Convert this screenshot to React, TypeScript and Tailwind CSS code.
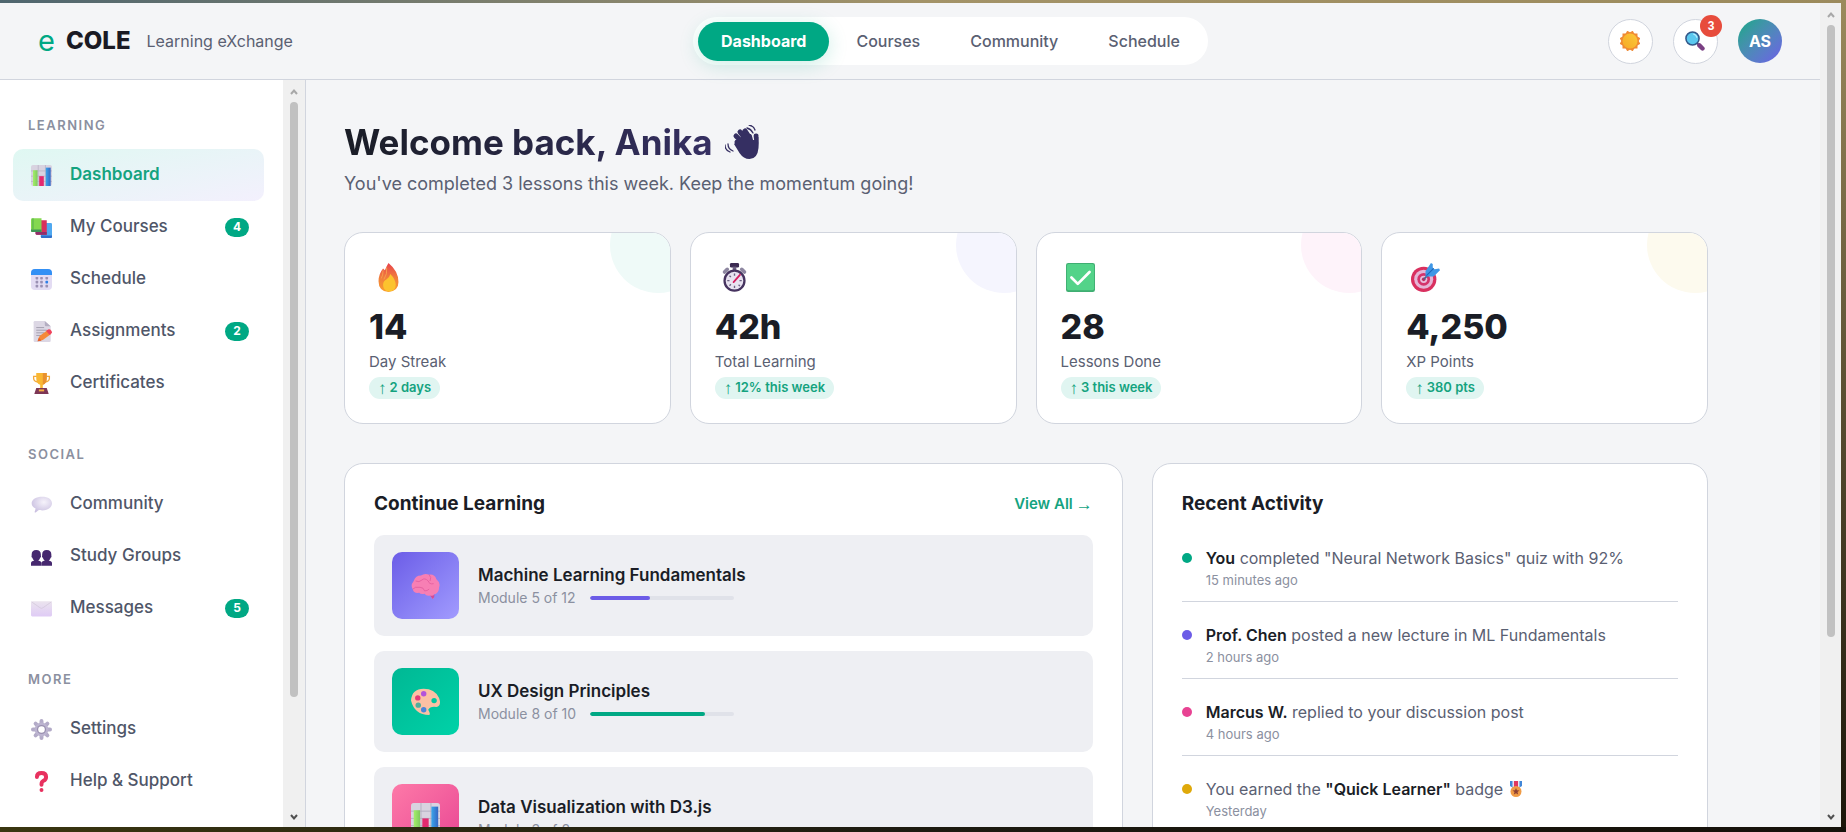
import React from "react";

type IconProps = { className?: string };

function ChartIcon({ className }: IconProps) {
  return (
    <svg viewBox="0 0 32 32" className={className} aria-hidden>
      <defs>
        <linearGradient id="barGreen" x1="0" x2="1">
          <stop offset="0" stopColor="#a4f06a" />
          <stop offset="1" stopColor="#7fc95e" />
        </linearGradient>
        <linearGradient id="barBlue" x1="0" x2="1">
          <stop offset="0" stopColor="#3aa5ea" />
          <stop offset="1" stopColor="#3566c4" />
        </linearGradient>
      </defs>
      <rect width="32" height="32" rx="3" fill="#d8d3e0" />
      <path d="M0 9h32M0 17h32M0 25h32M11 0v32M22 0v32" stroke="#b3adc0" strokeWidth="1" />
      <rect x="3" y="8" width="7" height="24" fill="url(#barGreen)" />
      <rect x="12.500" y="17" width="7" height="15" fill="#e3296f" />
      <rect x="22.500" y="4" width="7.500" height="28" fill="url(#barBlue)" />
    </svg>
  );
}

function BooksIcon({ className }: IconProps) {
  return (
    <svg viewBox="0 0 32 32" className={className} aria-hidden>
      <path d="M15 9h15a2 2 0 0 1 2 2v19a2 2 0 0 1-2 2H17a2 2 0 0 1-2-2z" fill="#4fa8f0" />
      <path d="M15 28h17v2a2 2 0 0 1-2 2H17a2 2 0 0 1-2-2z" fill="#2f6fc9" />
      <path d="M7 5h17v22H9a2 2 0 0 1-2-2z" fill="#d92f5c" />
      <path d="M7 23h17v4H9a2 2 0 0 1-2-2z" fill="#8d2f6b" />
      <path d="M2 2h14v21H2a2 2 0 0 1-2-2V4a2 2 0 0 1 2-2z" fill="#84d850" />
      <path d="M0 19h16v4H2a2 2 0 0 1-2-2z" fill="#3f9457" />
      <path d="M3 2v17" stroke="#4fae4d" strokeWidth="1.500" />
    </svg>
  );
}

function CalendarIcon({ className }: IconProps) {
  return (
    <svg viewBox="0 0 32 32" className={className} aria-hidden>
      <rect width="32" height="32" rx="6" fill="#e3dcf3" />
      <path d="M0 9V6a6 6 0 0 1 6-6h20a6 6 0 0 1 6 6v3z" fill="#3390f5" />
      <g fill="#9a90b3">
        <rect x="7" y="12" width="4" height="4" rx="1" />
        <rect x="14" y="12" width="4" height="4" rx="1" />
        <rect x="22" y="12" width="4" height="4" rx="1" />
        <rect x="7" y="18" width="4" height="4" rx="1" />
        <rect x="14" y="18" width="4" height="4" rx="1" />
        <rect x="7" y="24" width="4" height="4" rx="1" />
        <rect x="14" y="24" width="4" height="4" rx="1" />
        <rect x="22" y="24" width="4" height="4" rx="1" />
      </g>
      <rect x="22" y="18" width="4" height="4" rx="1" fill="#2f7fe6" />
    </svg>
  );
}

function MemoIcon({ className }: IconProps) {
  return (
    <svg viewBox="0 0 32 32" className={className} aria-hidden>
      <path d="M6 0h15l9 8v22a2 2 0 0 1-2 2H6a2 2 0 0 1-2-2V2a2 2 0 0 1 2-2z" fill="#dcd7e4" />
      <path d="M21 0l9 8h-7a2 2 0 0 1-2-2z" fill="#b4aec2" />
      <path d="M8 10h12M8 14h16M8 18h12M8 22h8" stroke="#a49fb0" strokeWidth="1.500" />
      <path d="M10 31l3-8L25 14l5 6-12 9z" fill="#f5893a" />
      <path d="M23 15l3-2q3-1 5 2t-1 5l-2 1z" fill="#f0435c" />
      <path d="M10 31l2-6 4 5z" fill="#e8622c" />
    </svg>
  );
}

function TrophyIcon({ className }: IconProps) {
  return (
    <svg viewBox="0 0 32 32" className={className} aria-hidden>
      <path d="M9 5H4v3q0 5 7 6M23 5h5v3q0 5-7 6" fill="none" stroke="#f2a93b" strokeWidth="2" />
      <path d="M8 0h16v8q0 8-6 10v5h-4v-5Q8 16 8 8z" fill="#f9b733" />
      <path d="M18 0h6v8q0 8-6 10z" fill="#e89130" />
      <path d="M8 23h16l3 9H5z" fill="#7d3655" />
      <rect x="12" y="25" width="8" height="3" fill="#f5b041" />
    </svg>
  );
}

function SpeechIcon({ className }: IconProps) {
  return (
    <svg viewBox="0 0 32 32" className={className} aria-hidden>
      <defs>
        <radialGradient id="bubble" cx="0.6" cy="0.35" r="0.7">
          <stop offset="0" stopColor="#f6f3fb" />
          <stop offset="1" stopColor="#c9bfe0" />
        </radialGradient>
      </defs>
      <path
        d="M17 4c9 0 15 4 15 10s-6 11-15 11c-2 0-3 0-5-.5L7 28c-1 .5-2 0-1-2l1-4C3 20 1 18 1 14 1 8 8 4 17 4z"
        fill="url(#bubble)"
      />
    </svg>
  );
}

function PeopleIcon({ className }: IconProps) {
  return (
    <svg viewBox="0 0 32 32" className={className} aria-hidden>
      <g fill="#46286f">
        <path d="M1 13q0-7 7-7t7 7v1q1 3-1 4-1 3-3 4 5 1 5 4v4H0v-4q0-3 5-4-2-1-3-4-2-1-1-4z" />
        <path d="M17 13q0-7 7-7t7 7v1q1 3-1 4-1 3-3 4 5 1 5 4v4H16v-4q0-3 5-4-2-1-3-4-2-1-1-4z" />
      </g>
    </svg>
  );
}

function EnvelopeIcon({ className }: IconProps) {
  return (
    <svg viewBox="0 0 32 32" className={className} aria-hidden>
      <defs>
        <linearGradient id="paper" x1="0" y1="0" x2="0" y2="1">
          <stop offset="0" stopColor="#ebe4ee" />
          <stop offset="1" stopColor="#dfcbf5" />
        </linearGradient>
      </defs>
      <rect y="5" width="32" height="23" rx="2" fill="url(#paper)" />
      <path d="M1 6l13 9q2 1.500 4 0L31 6" fill="none" stroke="#cfc5d8" strokeWidth="1" />
    </svg>
  );
}

function GearIcon({ className }: IconProps) {
  return (
    <svg viewBox="0 0 32 32" className={className} aria-hidden>
      <g stroke="#b3abc8" strokeWidth="6" strokeLinecap="round">
        <path d="M16 3v26M3 16h26M7 7l18 18M25 7L7 25" />
      </g>
      <circle cx="16" cy="16" r="10.500" fill="#bcb4d0" />
      <circle cx="16" cy="16" r="7" fill="#9a90b0" />
      <circle cx="16" cy="16" r="5" fill="#fff" />
    </svg>
  );
}

function QuestionIcon({ className }: IconProps) {
  return (
    <svg viewBox="0 0 32 32" className={className} aria-hidden>
      <path
        d="M9 9q0-6 7-6t7 6q0 4-4 6-3 1.500-3 5v1"
        fill="none"
        stroke="#e8315f"
        strokeWidth="6"
        strokeLinecap="round"
      />
      <circle cx="16" cy="29" r="3" fill="#e8315f" />
    </svg>
  );
}

function SunIcon({ className }: IconProps) {
  return (
    <svg viewBox="0 0 32 32" className={className} aria-hidden>
      <defs>
        <linearGradient id="sunFace" x1="0" y1="1" x2="1" y2="0">
          <stop offset="0" stopColor="#f5a928" />
          <stop offset="1" stopColor="#fcc938" />
        </linearGradient>
      </defs>
      <g fill="#f08a34">
        <rect x="4" y="4" width="24" height="24" />
        <rect x="4" y="4" width="24" height="24" transform="rotate(30 16 16)" />
        <rect x="4" y="4" width="24" height="24" transform="rotate(60 16 16)" />
      </g>
      <circle cx="16" cy="16" r="12" fill="url(#sunFace)" />
    </svg>
  );
}

function MagnifierIcon({ className }: IconProps) {
  return (
    <svg viewBox="0 0 32 32" className={className} aria-hidden>
      <path d="M19 19l4 4" stroke="#4b4170" strokeWidth="3" />
      <path d="M23 23l5 5" stroke="#7a3f83" strokeWidth="7" strokeLinecap="round" />
      <circle cx="12" cy="12" r="10.500" fill="#5bc8ef" stroke="#33588a" strokeWidth="2.500" />
      <path d="M14 5q4 1 5 5" stroke="#b5edff" strokeWidth="2" fill="none" strokeLinecap="round" />
    </svg>
  );
}

function WaveIcon({ className }: IconProps) {
  return (
    <svg viewBox="0 0 34 34" className={className} aria-hidden>
      <g stroke="#352f62" strokeWidth="5" strokeLinecap="round">
        <path d="M12 17l8 8M11 11l9 9M15 7l8 10M20 6l6 9M31 11l-1 11" />
      </g>
      <path d="M9 19l9-9 8-1 3 5 4.500-2q.5 6 0 11-1 11-9 11-6 0-10-6z" fill="#352f62" />
      <path d="M27 8l1.500 6.500" stroke="#f4f5f7" strokeWidth="1.200" strokeLinecap="round" />
      <path
        d="M22 3q4 1 6 5M24 0q5 1 6 5M3 19q0 5 5 7M0 20q0 5 5 7"
        fill="none"
        stroke="#352f62"
        strokeWidth="1.300"
        strokeLinecap="round"
      />
    </svg>
  );
}

function FireIcon({ className }: IconProps) {
  return (
    <svg viewBox="0 0 32 32" className={className} aria-hidden>
      <defs>
        <linearGradient id="flame" x1="0" y1="0" x2="0" y2="1">
          <stop offset="0" stopColor="#e8434d" />
          <stop offset="0.500" stopColor="#f07d3c" />
          <stop offset="1" stopColor="#f9a02f" />
        </linearGradient>
      </defs>
      <path d="M16 0q11 9 11 21 0 10-11 11Q5 31 5 20q0-8 5-14l2 2q2-5 4-8z" fill="url(#flame)" />
      <path d="M18 12q6 6 6 12 0 7-8 7.500-6-1-6-7.500 0-4 4-6 3-2 4-6z" fill="#fcc32e" />
      <path d="M8 17q2-3 2-9M11 18q4-6 3-13" stroke="#f6a04d" fill="none" strokeWidth="1" />
    </svg>
  );
}

function StopwatchIcon({ className }: IconProps) {
  return (
    <svg viewBox="0 0 32 32" className={className} aria-hidden>
      <path d="M5 10l3-3M27 10l-3-3" stroke="#8d86a0" strokeWidth="4" strokeLinecap="round" />
      <rect x="11" y="0" width="10" height="5" rx="1.500" fill="#3c2b52" />
      <rect x="14" y="4" width="4" height="4" fill="#6b5f80" />
      <circle cx="16" cy="19.500" r="11" fill="#e8e2f0" stroke="#46335f" strokeWidth="2.500" />
      <path d="M16 11.500v2.500M16 25v2.500M8 19.500h2.500M21.500 19.500H24M10.500 14l1.500 1.500M20.500 24l1.500 1.500M10.500 25l1.500-1.500" stroke="#6b5f80" strokeWidth="1.500" />
      <path d="M15 21l7-8" stroke="#d61f62" strokeWidth="2" strokeLinecap="round" />
    </svg>
  );
}

function CheckIcon({ className }: IconProps) {
  return (
    <svg viewBox="0 0 32 32" className={className} aria-hidden>
      <rect x="0" width="32" height="32" rx="2.500" fill="#3fae72" />
      <rect x="1" y="1" width="30" height="29" rx="2" fill="#53d389" />
      <path d="M6 16l7 7L26 10" fill="none" stroke="#fff" strokeWidth="3" strokeLinecap="round" strokeLinejoin="round" />
    </svg>
  );
}

function TargetIcon({ className }: IconProps) {
  return (
    <svg viewBox="0 0 32 32" className={className} aria-hidden>
      <circle cx="14" cy="18" r="14" fill="#d9305f" />
      <circle cx="14" cy="18" r="10.500" fill="#e5b5d6" />
      <circle cx="14" cy="18" r="7" fill="#d4346b" />
      <circle cx="14" cy="18" r="4" fill="#e8bddb" />
      <circle cx="14" cy="18" r="2" fill="#c22a5c" />
      <path d="M14 18l9-9" stroke="#4b5f8f" strokeWidth="1.800" />
      <path d="M16 15V9l6-9 2 1v4l2 2 5-1 1 2-7 7z" fill="#3f97e6" />
      <path d="M17 14l8-8" stroke="#1f66b8" strokeWidth="1.200" />
    </svg>
  );
}

function BrainIcon({ className }: IconProps) {
  return (
    <svg viewBox="0 0 32 32" className={className} aria-hidden>
      <path
        d="M2 20Q-1 16 3 11 5 5 11 5q4-3 9-1 6-1 8 5 5 4 3 9 0 7-6 8 1 4-1 5l-3-4q-4 1-6-2-4 1-6-1-6 1-7-4z"
        fill="#f77fb4"
      />
      <path
        d="M2 20q2-3 8-2 4 0 5 4 3 0 5-2M5 11q4 2 7-1t7 1q1 4 6 3M20 4q3 3 1 7"
        fill="none"
        stroke="#e35f9f"
        strokeWidth="1"
      />
      <path d="M21 27q3 1 5-1 0 4-2 5z" fill="#d14b98" />
    </svg>
  );
}

function PaletteIcon({ className }: IconProps) {
  return (
    <svg viewBox="0 0 32 32" className={className} aria-hidden>
      <path
        fillRule="evenodd"
        d="M0 15Q1 2 14 2q12 0 17 10 3 9-3 10-7-1-9 3 3 5 1 6Q4 31 0 15zm22.500 0a3 3 0 1 0 6 0 3 3 0 1 0-6 0z"
        fill="#fcc0a4"
      />
      <circle cx="14" cy="7.500" r="3" fill="#b353db" />
      <circle cx="7.500" cy="12" r="3" fill="#e33a78" />
      <circle cx="8" cy="20" r="3" fill="#4fae9c" />
      <circle cx="14" cy="25" r="3" fill="#4a86d9" />
    </svg>
  );
}

function MedalIcon({ className }: IconProps) {
  return (
    <svg viewBox="0 0 32 32" className={className} aria-hidden>
      <path d="M4 0h24v10l-8 5h-8l-8-5z" fill="#4187d8" />
      <path d="M9 0h14v12H9z" fill="#e9e4f0" />
      <path d="M12 0h8v13h-8z" fill="#e0375f" />
      <circle cx="16" cy="21" r="11" fill="#f09b45" />
      <path d="M16 14l2 4.500 5 .5-4 3.200 1.300 4.800-4.300-2.600-4.300 2.600L13 22.200 9 19l5-.5z" fill="#8d4032" />
    </svg>
  );
}

type NavItem = {
  label: string;
  icon: (p: IconProps) => React.ReactElement;
  badge?: number;
  active?: boolean;
};

const sections: { title: string; items: NavItem[] }[] = [
  {
    title: "LEARNING",
    items: [
      { label: "Dashboard", icon: ChartIcon, active: true },
      { label: "My Courses", icon: BooksIcon, badge: 4 },
      { label: "Schedule", icon: CalendarIcon },
      { label: "Assignments", icon: MemoIcon, badge: 2 },
      { label: "Certificates", icon: TrophyIcon },
    ],
  },
  {
    title: "SOCIAL",
    items: [
      { label: "Community", icon: SpeechIcon },
      { label: "Study Groups", icon: PeopleIcon },
      { label: "Messages", icon: EnvelopeIcon, badge: 5 },
    ],
  },
  {
    title: "MORE",
    items: [
      { label: "Settings", icon: GearIcon },
      { label: "Help & Support", icon: QuestionIcon },
    ],
  },
];

const stats = [
  { icon: FireIcon, value: "14", label: "Day Streak", change: "2 days", tint: "bg-[#effaf8]" },
  { icon: StopwatchIcon, value: "42h", label: "Total Learning", change: "12% this week", tint: "bg-[#f5f5fe]" },
  { icon: CheckIcon, value: "28", label: "Lessons Done", change: "3 this week", tint: "bg-[#fef3fa]" },
  { icon: TargetIcon, value: "4,250", label: "XP Points", change: "380 pts", tint: "bg-[#fdfaee]" },
];

const courses = [
  {
    title: "Machine Learning Fundamentals",
    module: "Module 5 of 12",
    icon: BrainIcon,
    progress: 42,
    thumb: "from-[#6c5ce7] to-[#a29bfe]",
    bar: "bg-[#6c5ce7]",
  },
  {
    title: "UX Design Principles",
    module: "Module 8 of 10",
    icon: PaletteIcon,
    progress: 80,
    thumb: "from-[#00b894] to-[#00d2a8]",
    bar: "bg-[#00a884]",
  },
  {
    title: "Data Visualization with D3.js",
    module: "Module 3 of 8",
    icon: ChartIcon,
    progress: 38,
    thumb: "from-[#fd79a8] to-[#e84393]",
    bar: "bg-[#e84393]",
  },
];

const strong = "font-semibold text-[#1a1d26]";

const activity = [
  {
    dot: "bg-[#00a884]",
    text: (
      <>
        <strong className={strong}>You</strong> completed "Neural Network Basics" quiz with 92%
      </>
    ),
    time: "15 minutes ago",
  },
  {
    dot: "bg-[#6c5ce7]",
    text: (
      <>
        <strong className={strong}>Prof. Chen</strong> posted a new lecture in ML Fundamentals
      </>
    ),
    time: "2 hours ago",
  },
  {
    dot: "bg-[#e84393]",
    text: (
      <>
        <strong className={strong}>Marcus W.</strong> replied to your discussion post
      </>
    ),
    time: "4 hours ago",
  },
  {
    dot: "bg-[#dfa90a]",
    text: (
      <>
        You earned the <strong className={strong}>"Quick Learner"</strong> badge{" "}
        <MedalIcon className="inline size-4 align-[-2px]" />
      </>
    ),
    time: "Yesterday",
  },
];

function ScrollTrack({ className, thumb }: { className: string; thumb: string }) {
  return (
    <div className={`flex shrink-0 flex-col items-center bg-[#f0f0f0] ${className}`} aria-hidden>
      <svg viewBox="0 0 22 22" className="size-[22px] shrink-0">
        <path d="M8 14l3-3.500 3 3.500" fill="none" stroke="#a8a8a8" strokeWidth="2" />
      </svg>
      <div className="min-h-0 w-2 flex-1">
        <div className={`w-full rounded-full bg-[#c1c1c1] ${thumb}`} />
      </div>
      <svg viewBox="0 0 22 22" className="size-[22px] shrink-0">
        <path d="M8 10l3 3.500 3-3.500" fill="none" stroke="#505050" strokeWidth="2" />
      </svg>
    </div>
  );
}

function Header() {
  return (
    <header className="flex h-[77px] shrink-0 items-center justify-between border-b border-[#d1d5de] bg-[#f4f5f7] px-[38px]">
      <div className="flex items-center">
        <span className="text-[29px] leading-8 text-[#00a884]">e</span>
        <span className="ml-[11px] text-[24px] leading-8 font-extrabold text-[#1a1a24]">COLE</span>
        <span className="ml-4 text-[16px] text-[#5a6072]">Learning eXchange</span>
      </div>
      <nav className="flex h-12 items-center gap-1 rounded-full bg-white px-[5px]">
        <a
          href="#dashboard"
          className="flex h-[39px] items-center rounded-full bg-[#00a884] px-[23px] text-[16px] font-bold text-white shadow-[0_4px_20px_rgba(0,168,132,0.2)]"
        >
          Dashboard
        </a>
        <a href="#courses" className="px-[23px] text-[16px] font-medium text-[#5a6072]">
          Courses
        </a>
        <a href="#community" className="px-[23px] text-[16px] font-medium text-[#5a6072]">
          Community
        </a>
        <a href="#schedule" className="px-[23px] text-[16px] font-medium text-[#5a6072]">
          Schedule
        </a>
      </nav>
      <div className="flex items-center gap-5">
        <button
          aria-label="Toggle theme"
          className="flex size-[45px] items-center justify-center rounded-full border border-[#d1d5de] bg-white"
        >
          <SunIcon className="size-5" />
        </button>
        <button
          aria-label="Search"
          className="relative flex size-[45px] items-center justify-center rounded-full border border-[#d1d5de] bg-white"
        >
          <MagnifierIcon className="size-5" />
          <span className="absolute -top-[5px] -right-[5px] flex size-[22px] items-center justify-center rounded-full bg-[#e74c3c] font-['Liberation_Sans',sans-serif] text-[12px] font-bold text-white">
            3
          </span>
        </button>
        <button
          aria-label="Account"
          className="flex size-11 items-center justify-center rounded-full bg-linear-to-br from-[#00a884] to-[#6c5ce7] text-[16px] font-bold text-white"
        >
          AS
        </button>
      </div>
    </header>
  );
}

function Sidebar() {
  return (
    <aside className="flex w-[306px] shrink-0 border-r border-[#d1d5de] bg-white">
      <nav className="flex min-w-0 flex-1 flex-col gap-[35px] overflow-y-auto pt-[35px] pr-[19px] pl-[13px] [scrollbar-width:none]">
        {sections.map((s) => (
          <div key={s.title}>
            <h2 className="mb-[14px] pl-[15px] text-[13px] leading-5 font-semibold tracking-[1.5px] text-[#8b90a0]">
              {s.title}
            </h2>
            {s.items.map(({ label, icon: Icon, badge, active }) => (
              <a
                key={label}
                href="#"
                className={
                  active
                    ? "flex h-[52px] items-center gap-[18px] rounded-[10px] bg-linear-to-br from-[#dff8f2] to-[#f3f0fd] pr-[15px] pl-[18px] text-[17px] font-semibold text-[#14a37f]"
                    : "flex h-[52px] items-center gap-[18px] rounded-[10px] pr-[15px] pl-[18px] text-[17px] font-medium text-[#4f5668]"
                }
              >
                <Icon className="size-[21px] shrink-0" />
                <span className="flex-1">{label}</span>
                {badge && (
                  <span className="flex h-[19px] w-6 items-center justify-center rounded-full bg-[#00a884] text-[12px] font-bold text-white">
                    {badge}
                  </span>
                )}
              </a>
            ))}
          </div>
        ))}
      </nav>
      <ScrollTrack className="w-[22px]" thumb="h-[84.6%]" />
    </aside>
  );
}

function Stats() {
  return (
    <section className="mt-[35px] grid grid-cols-4 gap-[19px]">
      {stats.map(({ icon: Icon, value, label, change, tint }) => (
        <div
          key={label}
          className="relative overflow-hidden rounded-[19px] border border-[#d1d5de] bg-white px-6 pt-[25px] pb-6"
        >
          <div className={`absolute -top-9 -right-9 size-24 rounded-full ${tint}`} />
          <div className="flex h-[39px] items-center pl-[5px]">
            <Icon className="size-[29px]" />
          </div>
          <div className="mt-[10px] text-[34px] leading-10 font-extrabold text-[#1a1d26]">{value}</div>
          <div className="mt-1 text-[15px] leading-[22px] text-[#5a6072]">{label}</div>
          <div className="mt-1 flex h-[22px] w-fit items-center gap-[3px] rounded-full bg-[#e0f5f1] px-[9px] text-[13px] font-semibold text-[#14a37f]">
            <span className="font-['Liberation_Sans',sans-serif] text-[17px] leading-none font-normal">↑</span>
            {change}
          </div>
        </div>
      ))}
    </section>
  );
}

function ContinueLearning() {
  return (
    <section className="rounded-[19px] border border-[#d1d5de] bg-white p-[29px]">
      <div className="mb-5 flex h-[22px] items-center justify-between">
        <h2 className="text-[19px] font-bold text-[#1a1d26]">Continue Learning</h2>
        <a href="#courses" className="flex items-center gap-[3px] text-[15px] font-semibold text-[#14a37f]">
          View All
          <span className="font-['Liberation_Sans',sans-serif] text-[17px] leading-none font-normal">→</span>
        </a>
      </div>
      <div className="flex flex-col gap-[15px]">
        {courses.map(({ title, module, icon: Icon, progress, thumb, bar }) => (
          <article key={title} className="flex items-center gap-[19px] rounded-[10px] bg-[#eeeff3] px-[18px] py-[17px]">
            <div className={`flex size-[67px] items-center justify-center rounded-[10px] bg-linear-to-br ${thumb}`}>
              <Icon className="size-[29px]" />
            </div>
            <div>
              <h3 className="text-[17px] leading-6 font-semibold text-[#1a1d26]">{title}</h3>
              <div className="flex items-center gap-[14px] text-[14px] leading-[22px] text-[#8b90a0]">
                {module}
                <div className="h-1 w-36 overflow-hidden rounded-full bg-[#e0e2e9]">
                  <div className={`h-full rounded-full ${bar}`} style={{ width: `${progress}%` }} />
                </div>
              </div>
            </div>
          </article>
        ))}
      </div>
    </section>
  );
}

function RecentActivity() {
  return (
    <section className="rounded-[19px] border border-[#d1d5de] bg-white p-[29px]">
      <h2 className="mb-[10px] flex h-[22px] items-center text-[19px] font-bold text-[#1a1d26]">Recent Activity</h2>
      <ul>
        {activity.map((a) => (
          <li key={a.time} className="flex gap-[14px] border-b border-[#d1d5de] pt-[22px] pb-[11px]">
            <span className={`mt-[6px] size-[10px] shrink-0 rounded-full ${a.dot}`} />
            <div>
              <p className="text-[16px] leading-[22px] text-[#5a6072]">{a.text}</p>
              <p className="mt-px text-[13px] leading-5 text-[#8b90a0]">{a.time}</p>
            </div>
          </li>
        ))}
      </ul>
    </section>
  );
}

export default function App() {
  return (
    <div className="flex h-screen flex-col overflow-hidden font-['Inter',sans-serif]">
      <div className="h-[3px] shrink-0 bg-linear-to-r from-[#4f666f] via-[#a39368] to-[#9b8a5c]" />
      <div className="flex min-h-0 flex-1">
        <div className="flex min-w-0 flex-1 flex-col bg-[#f4f5f7]">
          <Header />
          <div className="flex min-h-0 flex-1">
            <Sidebar />
            <main className="min-w-0 flex-1 overflow-y-auto [scrollbar-width:none]">
              <div className="max-w-[1440px] px-[38px] pt-[38px] pb-10">
                <h1 className="flex items-center gap-3 text-[35px] leading-[48px] font-bold">
                  <span className="bg-linear-to-r from-[#1a1d26] to-[#352f62] bg-clip-text text-transparent">
                    Welcome back, Anika
                  </span>
                  <WaveIcon className="size-[34px]" />
                </h1>
                <p className="mt-1 text-[18px] leading-[27px] text-[#5a6072]">
                  You've completed 3 lessons this week. Keep the momentum going!
                </p>
                <Stats />
                <div className="mt-[39px] grid grid-cols-[7fr_5fr] gap-[29px]">
                  <ContinueLearning />
                  <RecentActivity />
                </div>
              </div>
            </main>
          </div>
        </div>
        <ScrollTrack className="w-[21px]" thumb="h-[78.5%]" />
        <div className="w-[5px] shrink-0 bg-linear-to-b from-[#9b8a5c] to-[#1c160a]" />
      </div>
      <div className="h-[5px] shrink-0 bg-linear-to-r from-[#3a3610] via-[#1c1a10] to-[#15110a]" />
    </div>
  );
}
